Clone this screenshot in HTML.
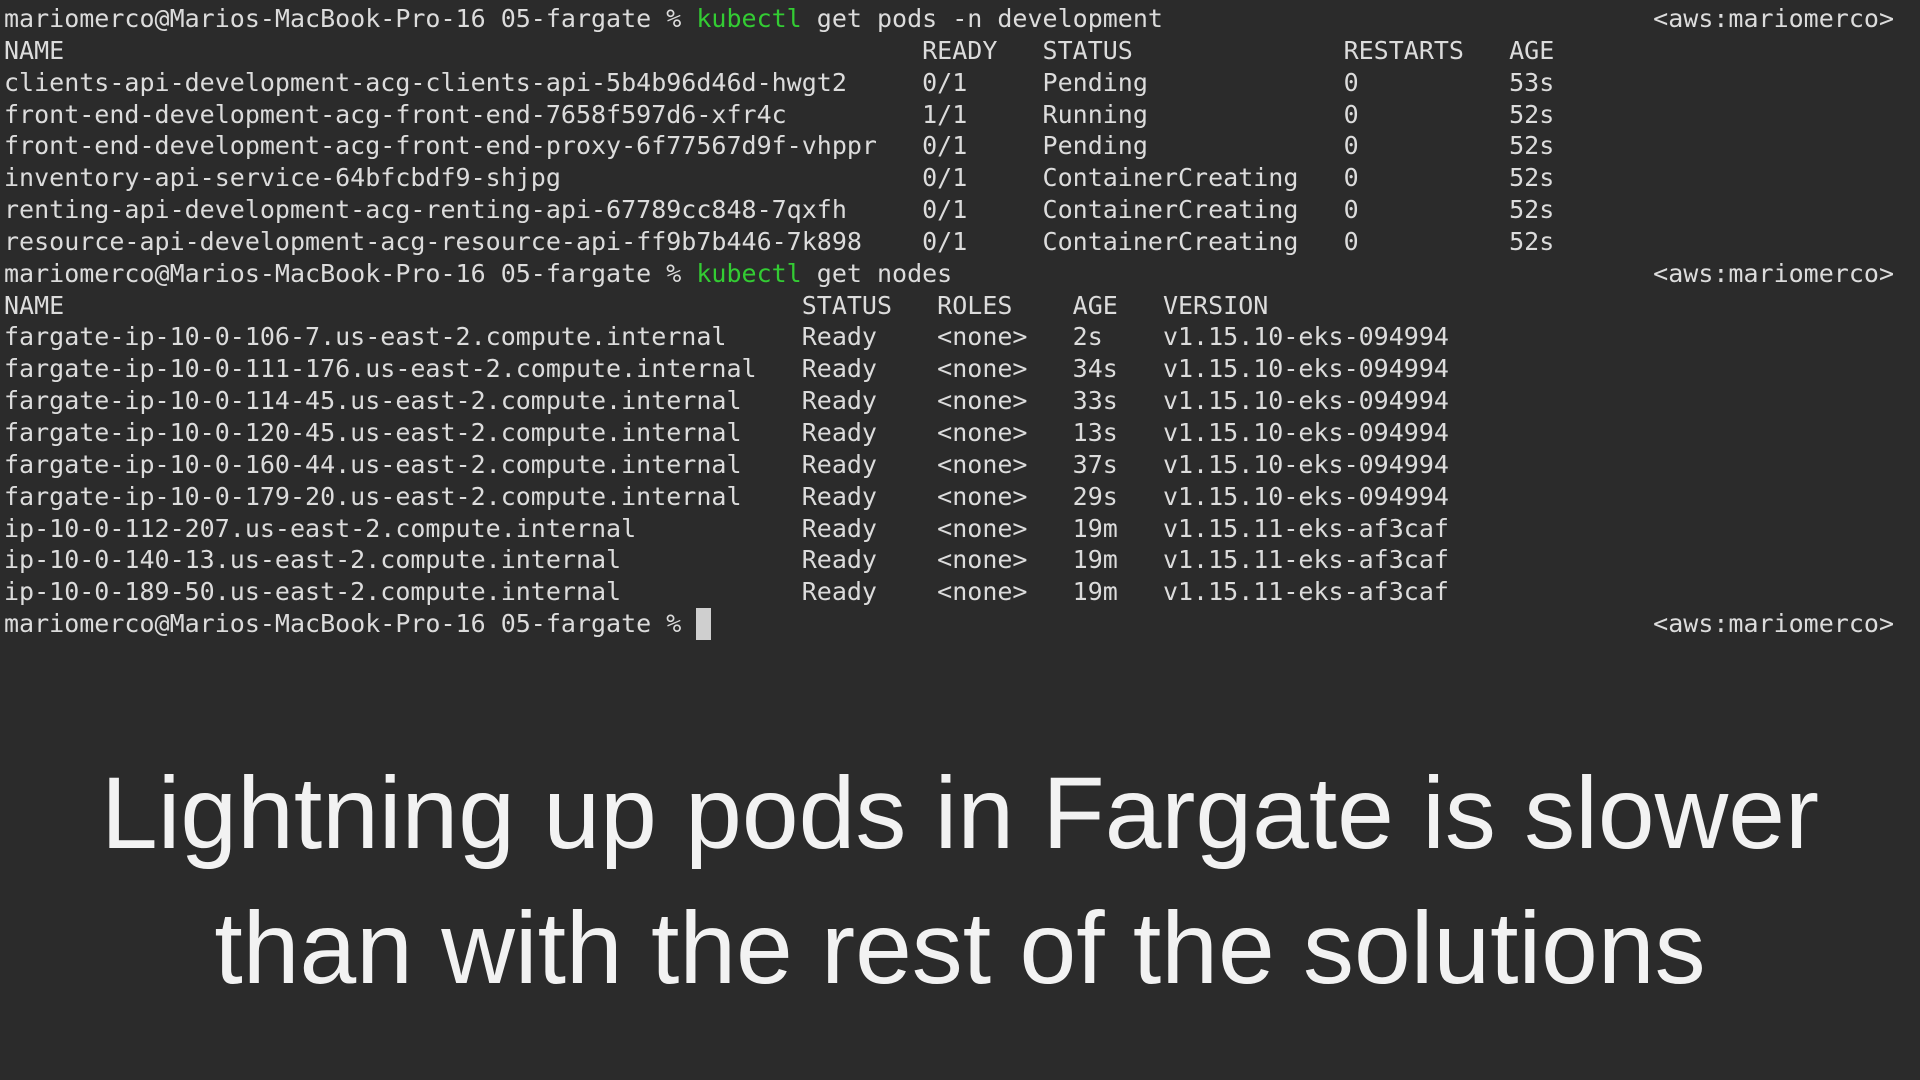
<!DOCTYPE html>
<html><head><meta charset="utf-8"><style>
html,body{margin:0;padding:0;background:#2b2b2b;width:1920px;height:1080px;overflow:hidden;position:relative}
pre,.rp{position:absolute;margin:0;font-family:"DejaVu Sans Mono","Liberation Mono",monospace;font-size:25px;line-height:31.85px;color:#dcdcdc}
pre{left:4px;top:3px}
.rp{right:26px}
.g{color:#33cc33}
.cur{display:inline-block;width:15px;height:32px;background:#cfcfcf;vertical-align:top}
.cap{position:absolute;left:0;width:1920px;text-align:center;font-family:"Liberation Sans",sans-serif;font-size:102px;color:#f2f2f2;line-height:1}
</style></head><body>
<pre>mariomerco@Marios-MacBook-Pro-16 05-fargate % <span class="g">kubectl</span> get pods -n development
NAME                                                         READY   STATUS              RESTARTS   AGE
clients-api-development-acg-clients-api-5b4b96d46d-hwgt2     0/1     Pending             0          53s
front-end-development-acg-front-end-7658f597d6-xfr4c         1/1     Running             0          52s
front-end-development-acg-front-end-proxy-6f77567d9f-vhppr   0/1     Pending             0          52s
inventory-api-service-64bfcbdf9-shjpg                        0/1     ContainerCreating   0          52s
renting-api-development-acg-renting-api-67789cc848-7qxfh     0/1     ContainerCreating   0          52s
resource-api-development-acg-resource-api-ff9b7b446-7k898    0/1     ContainerCreating   0          52s
mariomerco@Marios-MacBook-Pro-16 05-fargate % <span class="g">kubectl</span> get nodes
NAME                                                 STATUS   ROLES    AGE   VERSION
fargate-ip-10-0-106-7.us-east-2.compute.internal     Ready    &lt;none&gt;   2s    v1.15.10-eks-094994
fargate-ip-10-0-111-176.us-east-2.compute.internal   Ready    &lt;none&gt;   34s   v1.15.10-eks-094994
fargate-ip-10-0-114-45.us-east-2.compute.internal    Ready    &lt;none&gt;   33s   v1.15.10-eks-094994
fargate-ip-10-0-120-45.us-east-2.compute.internal    Ready    &lt;none&gt;   13s   v1.15.10-eks-094994
fargate-ip-10-0-160-44.us-east-2.compute.internal    Ready    &lt;none&gt;   37s   v1.15.10-eks-094994
fargate-ip-10-0-179-20.us-east-2.compute.internal    Ready    &lt;none&gt;   29s   v1.15.10-eks-094994
ip-10-0-112-207.us-east-2.compute.internal           Ready    &lt;none&gt;   19m   v1.15.11-eks-af3caf
ip-10-0-140-13.us-east-2.compute.internal            Ready    &lt;none&gt;   19m   v1.15.11-eks-af3caf
ip-10-0-189-50.us-east-2.compute.internal            Ready    &lt;none&gt;   19m   v1.15.11-eks-af3caf
mariomerco@Marios-MacBook-Pro-16 05-fargate % <span class="cur"></span></pre>
<div class="rp" style="top:3px">&lt;aws:mariomerco&gt;</div>
<div class="rp" style="top:258px">&lt;aws:mariomerco&gt;</div>
<div class="rp" style="top:608px">&lt;aws:mariomerco&gt;</div>
<div class="cap" style="top:762px">Lightning up pods in Fargate is slower</div>
<div class="cap" style="top:897px">than with the rest of the solutions</div>
</body></html>
